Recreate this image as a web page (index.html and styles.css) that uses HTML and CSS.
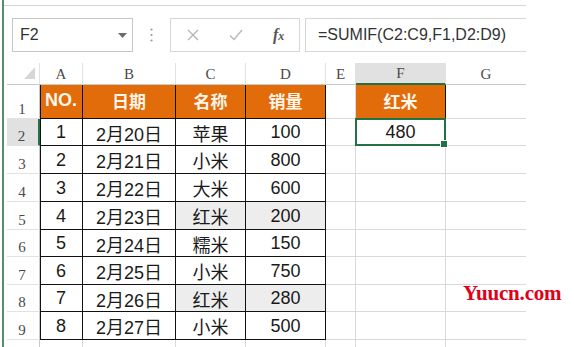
FILE: index.html
```html
<!DOCTYPE html>
<html lang="zh">
<head>
<meta charset="utf-8">
<title>SUMIF</title>
<link rel="stylesheet" href="styles.css">
</head>
<body>
<div class="app">
  <div class="ribbon-edge"></div>
  <div class="formula-bar">
    <div class="namebox">
      <span>F2</span>
      <svg class="caret" width="9" height="5" viewBox="0 0 9 5"><polygon points="0,0 9,0 4.5,5" fill="#6b6b6b"/></svg>
    </div>
    <div class="grip">
      <svg width="3" height="14" viewBox="0 0 3 14"><circle cx="1.5" cy="1.5" r="1.1" fill="#9a9a9a"/><circle cx="1.5" cy="7" r="1.1" fill="#9a9a9a"/><circle cx="1.5" cy="12.5" r="1.1" fill="#9a9a9a"/></svg>
    </div>
    <div class="fxbox">
      <svg class="btn-x" width="12" height="12" viewBox="0 0 12 12"><path d="M1 1 L11 11 M11 1 L1 11" stroke="#b4b4b4" stroke-width="1.3" fill="none"/></svg>
      <svg class="btn-ok" width="14" height="12" viewBox="0 0 14 12"><path d="M1 6.5 L5 10.5 L13 1" stroke="#b8b8b8" stroke-width="1.4" fill="none"/></svg>
      <span class="fx"><i>f</i><i class="fx-x">x</i></span>
    </div>
    <div class="formula">=SUMIF(C2:C9,F1,D2:D9)</div>
  </div>

  <div class="sheet">
    <div class="g ch corner"><svg width="11" height="12" viewBox="0 0 11 12"><polygon points="11,0 11,12 0,12" fill="#d7d7d7"/></svg></div>
    <div class="g ch">A</div>
    <div class="g ch">B</div>
    <div class="g ch">C</div>
    <div class="g ch">D</div>
    <div class="g ch">E</div>
    <div class="g ch selc">F</div>
    <div class="g ch last">G</div>

    <div class="g rh">1</div>
    <div class="g t a th">NO.</div>
    <div class="g t th cn">日期</div>
    <div class="g t th cn">名称</div>
    <div class="g t th cn">销量</div>
    <div class="g"></div>
    <div class="g t th cn">红米</div>
    <div class="g last"></div>

    <div class="g rh selr">2</div>
    <div class="g t a">1</div>
    <div class="g t">2月20日</div>
    <div class="g t">苹果</div>
    <div class="g t">100</div>
    <div class="g"></div>
    <div class="g active">480</div>
    <div class="g last"></div>

    <div class="g rh">3</div>
    <div class="g t a">2</div>
    <div class="g t">2月21日</div>
    <div class="g t">小米</div>
    <div class="g t">800</div>
    <div class="g"></div>
    <div class="g"></div>
    <div class="g last"></div>

    <div class="g rh">4</div>
    <div class="g t a">3</div>
    <div class="g t">2月22日</div>
    <div class="g t">大米</div>
    <div class="g t">600</div>
    <div class="g"></div>
    <div class="g"></div>
    <div class="g last"></div>

    <div class="g rh">5</div>
    <div class="g t a">4</div>
    <div class="g t">2月23日</div>
    <div class="g t sh">红米</div>
    <div class="g t sh">200</div>
    <div class="g"></div>
    <div class="g"></div>
    <div class="g last"></div>

    <div class="g rh">6</div>
    <div class="g t a">5</div>
    <div class="g t">2月24日</div>
    <div class="g t">糯米</div>
    <div class="g t">150</div>
    <div class="g"></div>
    <div class="g"></div>
    <div class="g last"></div>

    <div class="g rh">7</div>
    <div class="g t a">6</div>
    <div class="g t">2月25日</div>
    <div class="g t">小米</div>
    <div class="g t">750</div>
    <div class="g"></div>
    <div class="g"></div>
    <div class="g last"></div>

    <div class="g rh">8</div>
    <div class="g t a">7</div>
    <div class="g t">2月26日</div>
    <div class="g t sh">红米</div>
    <div class="g t sh">280</div>
    <div class="g"></div>
    <div class="g"></div>
    <div class="g last"></div>

    <div class="g rh">9</div>
    <div class="g t a">8</div>
    <div class="g t">2月27日</div>
    <div class="g t">小米</div>
    <div class="g t">500</div>
    <div class="g"></div>
    <div class="g"></div>
    <div class="g last"></div>

    <div class="g rh"></div>
    <div class="g"></div>
    <div class="g"></div>
    <div class="g"></div>
    <div class="g"></div>
    <div class="g"></div>
    <div class="g"></div>
    <div class="g last"></div>
  </div>
</div>
<div class="watermark">Yuucn.com</div>
</body>
</html>
```
FILE: styles.css
```css
* { box-sizing: border-box; margin: 0; padding: 0; }
html, body { width: 574px; height: 347px; overflow: hidden; background: #fff; }
body {
  position: relative;
  font-family: "Liberation Sans", "Noto Sans CJK SC", sans-serif;
  color: #222;
}
.app {
  margin-left: 2px;
  width: 524px;
  height: 347px;
  border-left: 2px solid #5b8a71;
}
.ribbon-edge { height: 6px; border-bottom: 1px solid #d6d6d6; }

.formula-bar {
  display: flex;
  height: 34px;
  margin-top: 12px;
  padding-left: 8px;
}
.namebox {
  width: 121px;
  border: 1px solid #c6c6c6;
  display: flex;
  align-items: center;
  justify-content: space-between;
  padding: 0 5px 0 7px;
  font-size: 16px;
  color: #333;
}
.grip { width: 37px; display: flex; align-items: center; justify-content: center; }
.fxbox {
  width: 130px;
  border: 1px solid #d6d6d6;
  display: flex;
  align-items: center;
  padding-left: 16px;
}
.btn-ok { margin-left: 30px; }
.fx {
  margin-left: 30px;
  font-family: "Liberation Serif", serif;
  font-weight: bold;
  color: #555;
  font-size: 16px;
}
.fx-x { font-size: 12px; }
.formula {
  flex: 1;
  margin-left: 5px;
  border: 1px solid #d6d6d6;
  border-right: none;
  display: flex;
  align-items: center;
  padding-left: 12px;
  font-size: 16px;
  color: #333;
}

.sheet {
  margin-top: 11px;
  padding-left: 3px;
  display: grid;
  grid-template-columns: 33px 43px 93px 70px 80px 30px 90px 80px;
  grid-template-rows: 22px 34px 27px 28px 28px 28px 27px 28px 27px 28px 28px;
}
.g {
  border-right: 1px solid #d9d9d9;
  border-bottom: 1px solid #d9d9d9;
  display: flex;
  align-items: center;
  justify-content: center;
  font-size: 18px;
  color: #1a1a1a;
  padding-top: 1px;
}
.ch {
  font-family: "Liberation Serif", serif;
  font-size: 15px;
  color: #4a4a4a;
  border-bottom-color: #c9c9c9;
  border-right-color: #e2e2e2;
}
.corner { justify-content: flex-end; align-items: flex-end; padding: 0 4px 5px 0; }
.rh {
  font-family: "Liberation Serif", serif;
  font-size: 15px;
  line-height: 15px;
  color: #4a4a4a;
  border-right-color: #c9c9c9;
  border-bottom-color: #e2e2e2;
  align-items: flex-end;
  padding: 0 2px 1px 0;
}
.selc { background: #e1e1e1; border-bottom: 2px solid #217346; }
.selr { background: #e1e1e1; border-right: 2px solid #217346; }
.t { border-right-color: #111; border-bottom-color: #111; }
.a { box-shadow: inset 1px 0 0 #111; }
.th {
  background: #e26b0a;
  color: #fff6ea;
  font-weight: bold;
  font-size: 18px;
  padding: 0 0 2px;
}
.th.cn { font-size: 17px; }
.sh { background: #ededed; }
.last { border-right: none; }
.active { position: relative; }
.active::before {
  content: "";
  position: absolute;
  left: -1px; top: -1px; right: -1px; bottom: -1px;
  border: 2px solid #217346;
}
.active::after {
  content: "";
  position: absolute;
  right: -3px; bottom: -3px;
  width: 6px; height: 6px;
  background: #217346;
  border: 1px solid #fff;
}

.watermark {
  position: absolute;
  left: 463px;
  top: 281px;
  font-family: "Liberation Serif", serif;
  font-weight: bold;
  font-size: 21px;
  line-height: 24px;
  letter-spacing: -0.2px;
  color: #e0001a;
}
```
